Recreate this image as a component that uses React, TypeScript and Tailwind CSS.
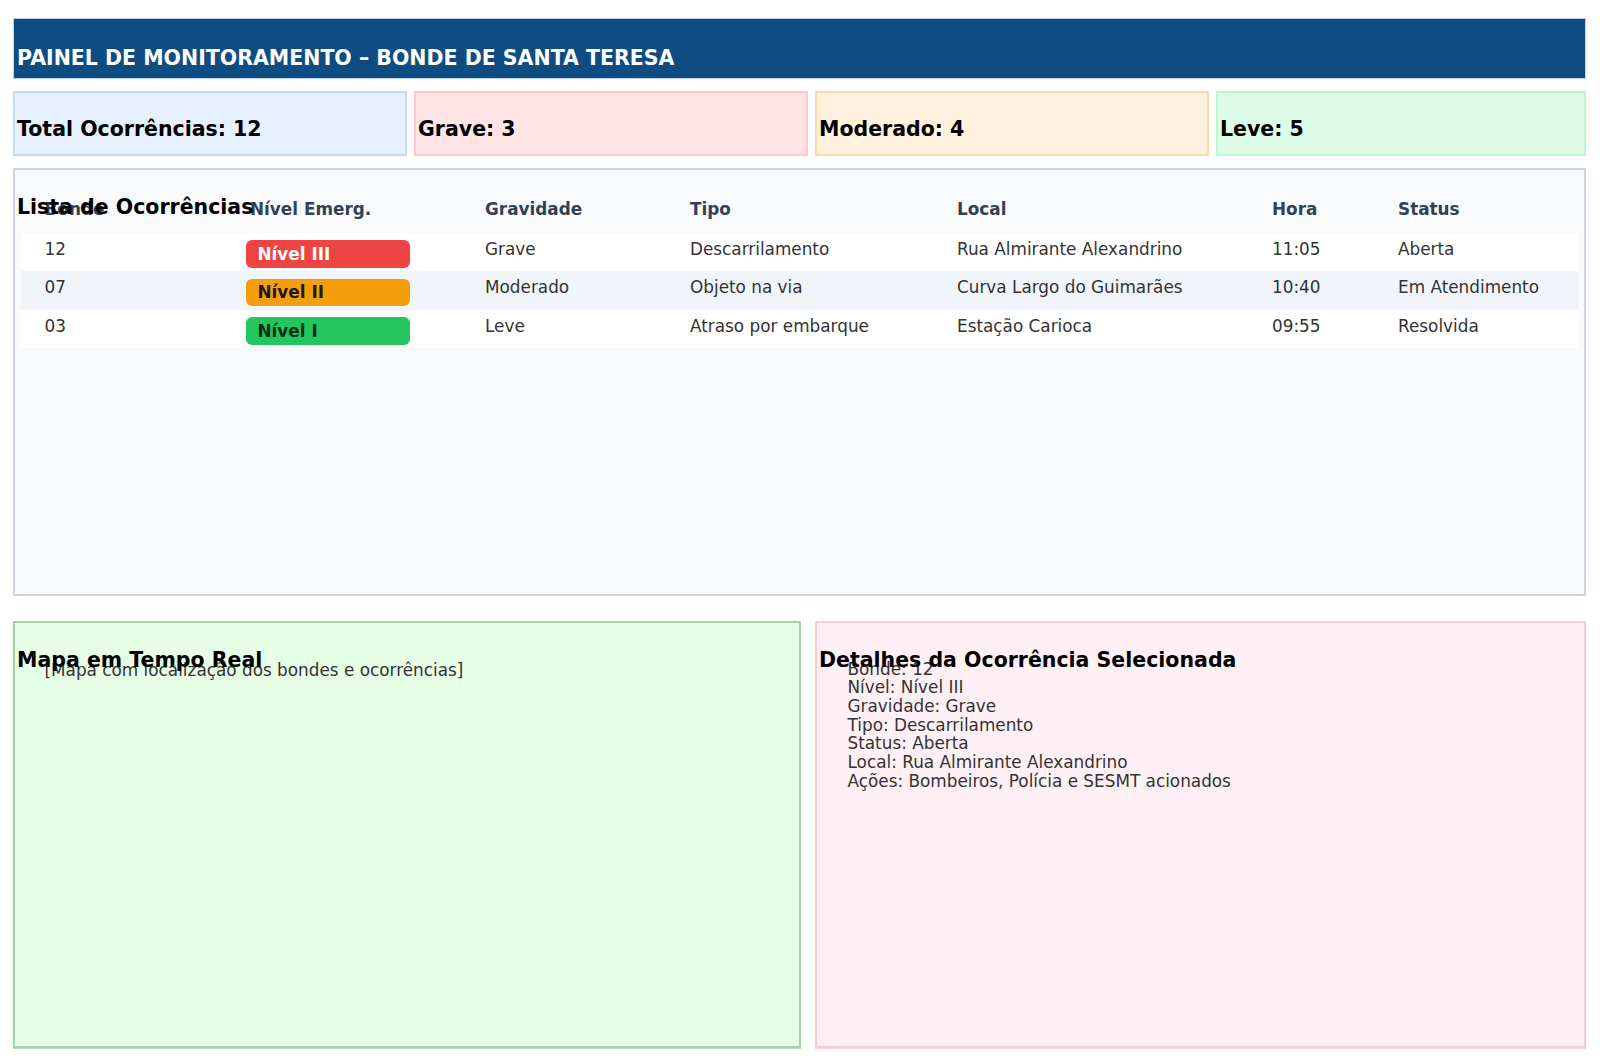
import React from 'react';

type Ocorrencia = {
  bonde: string;
  nivel: string;
  gravidade: string;
  tipo: string;
  local: string;
  hora: string;
  status: string;
};

const ocorrencias: Ocorrencia[] = [
  { bonde: '12', nivel: 'Nível III', gravidade: 'Grave', tipo: 'Descarrilamento', local: 'Rua Almirante Alexandrino', hora: '11:05', status: 'Aberta' },
  { bonde: '07', nivel: 'Nível II', gravidade: 'Moderado', tipo: 'Objeto na via', local: 'Curva Largo do Guimarães', hora: '10:40', status: 'Em Atendimento' },
  { bonde: '03', nivel: 'Nível I', gravidade: 'Leve', tipo: 'Atraso por embarque', local: 'Estação Carioca', hora: '09:55', status: 'Resolvida' },
];

const badgeClass: Record<string, string> = {
  'Nível III': 'bg-[#ef4444] text-white',
  'Nível II': 'bg-[#f59e0b] text-[#1c1917]',
  'Nível I': 'bg-[#22c55e] text-[#052e16]',
};

const cols = 'grid grid-cols-[225px_235px_205px_267px_315px_126px_184px]';

function StatCard({ label, className }: { label: string; className: string }) {
  return (
    <div className={`h-[65px] border-2 pl-[2px] pt-[24px] ${className}`}>
      <div className="text-[20.5px] font-bold leading-[24px] text-black">{label}</div>
    </div>
  );
}

export default function App() {
  const sel = ocorrencias[0];

  return (
    <div
      className="min-h-screen bg-white pl-[13px] pt-[18px] text-[#333333]"
      style={{ fontFamily: '"DejaVu Sans", Verdana, sans-serif' }}
    >
      <div className="w-[1573px]">
        {/* Header */}
        <div className="h-[61px] bg-[#0f4c81] border border-[#bcd4ea] pl-[3px] pt-[26.5px]">
          <h1 className="text-[20.5px] font-bold leading-[24px] text-white">
            PAINEL DE MONITORAMENTO – BONDE DE SANTA TERESA
          </h1>
        </div>

        {/* Stats */}
        <div className="mt-[12px] grid grid-cols-[394px_394px_394px_370px] gap-[7px]">
          <StatCard label="Total Ocorrências: 12" className="bg-[#e6f0ff] border-[#c7d5fb]" />
          <StatCard label="Grave: 3" className="bg-[#ffe3e5] border-[#fccaca]" />
          <StatCard label="Moderado: 4" className="bg-[#fff1dd] border-[#fdd8ab]" />
          <StatCard label="Leve: 5" className="bg-[#dcfce8] border-[#bdf5d2]" />
        </div>

        {/* Lista */}
        <div className="relative mt-[12px] h-[428px] border-2 border-[#cbd5e1] bg-[#f8fafc] px-[6px] pt-[29px]">
          <h2 className="absolute left-[2px] top-[25px] text-[20.5px] font-bold leading-[24px] text-black">
            Lista de Ocorrências
          </h2>
          <div className={`${cols} h-[33.5px] text-[16.85px] font-bold leading-[20px] text-[#334155]`}>
            <div className="pl-[23.5px]">Bonde</div>
            <div className="pl-[4px]">Nível Emerg.</div>
            <div className="pl-[4px]">Gravidade</div>
            <div className="pl-[4px]">Tipo</div>
            <div className="pl-[4px]">Local</div>
            <div className="pl-[4px]">Hora</div>
            <div className="pl-[4px]">Status</div>
          </div>
          {ocorrencias.map((o, i) => (
            <div
              key={o.bonde}
              className={`${cols} h-[38.6px] pt-[6px] text-[16.85px] leading-[20px] ${i % 2 === 1 ? 'bg-[#f1f5f9]' : 'bg-white'}`}
            >
              <div className="pl-[23.5px]">{o.bonde}</div>
              <div>
                <div className={`mt-[1.5px] flex h-[27.7px] w-[164px] items-center rounded-md pl-[11.5px] font-bold ${badgeClass[o.nivel]}`}>
                  {o.nivel}
                </div>
              </div>
              <div className="pl-[4px]">{o.gravidade}</div>
              <div className="pl-[4px]">{o.tipo}</div>
              <div className="pl-[4px]">{o.local}</div>
              <div className="pl-[4px]">{o.hora}</div>
              <div className="pl-[4px]">{o.status}</div>
            </div>
          ))}
        </div>

        {/* Bottom panels */}
        <div className="mt-[25px] flex gap-[14px]">
          <div className="relative h-[427px] w-[788px] border-2 border-[#9fd6a8] bg-[#e6ffe6] pl-[29.5px] pt-[38px] shadow-[0_1px_0_#b5dcbc]">
            <h2 className="absolute left-[2px] top-[25px] text-[20.5px] font-bold leading-[24px] text-black">
              Mapa em Tempo Real
            </h2>
            <div className="text-[16.85px] leading-[18.7px]">[Mapa com localização dos bondes e ocorrências]</div>
          </div>
          <div className="relative h-[427px] w-[771px] border-2 border-[#fbc8d8] bg-[#fff0f5] pl-[30.5px] pt-[36.5px] shadow-[0_1px_0_#f3d0da]">
            <h2 className="absolute left-[2px] top-[25px] text-[20.5px] font-bold leading-[24px] text-black">
              Detalhes da Ocorrência Selecionada
            </h2>
            <div className="text-[16.85px] leading-[18.7px]">
              <div>Bonde: {sel.bonde}</div>
              <div>Nível: {sel.nivel}</div>
              <div>Gravidade: {sel.gravidade}</div>
              <div>Tipo: {sel.tipo}</div>
              <div>Status: {sel.status}</div>
              <div>Local: {sel.local}</div>
              <div>Ações: Bombeiros, Polícia e SESMT acionados</div>
            </div>
          </div>
        </div>
      </div>
    </div>
  );
}
